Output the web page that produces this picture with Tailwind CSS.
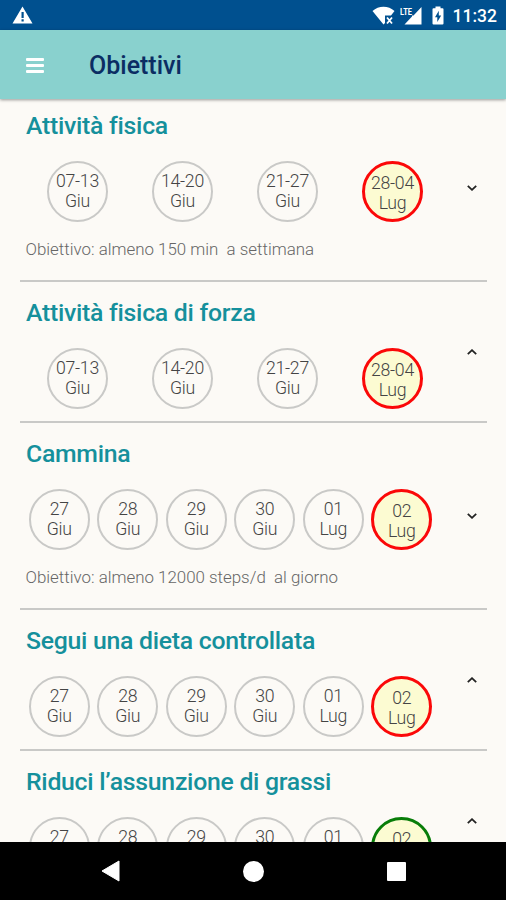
<!DOCTYPE html>
<html lang="it">
<head>
    <meta charset="UTF-8">
    <meta name="viewport" content="width=device-width, initial-scale=1.0">
    <title>Obiettivi</title>
    <script src="https://cdn.jsdelivr.net/npm/@tailwindcss/browser@4"></script>
</head>
<body class="h-screen flex flex-col overflow-hidden bg-[#fcfaf6] font-['Roboto',sans-serif]">
    <!-- Status bar -->
    <div class="h-[30px] shrink-0 bg-[#00508f] flex items-center justify-between pl-[12px] pr-[9px] text-white">
        <svg class="w-[21px] h-[18px]" viewBox="0 0 21 18" fill="currentColor">
            <path fill-rule="evenodd" d="M10.5 0.5L20.5 17.5H0.5ZM9.5 6V12H11.7V6ZM9.5 13.3V15.5H11.7V13.3Z"/>
        </svg>
        <div class="flex items-center">
            <svg class="w-[23px] h-[19px]" viewBox="0 0 23 19" fill="currentColor">
                <path d="M0.5 5C6.5 -0.7 16.5 -0.7 22.5 5L19 9.5H13V17L11.5 18.5Z"/>
                <path d="M15 11.5L20 17.5M20 11.5L15 17.5" stroke="currentColor" stroke-width="1.8"/>
            </svg>
            <svg class="w-[22px] h-[19px] ml-[5px]" viewBox="0 0 22 19" fill="currentColor">
                <path d="M21.5 1V18.5H4.5L12 10.5V9.5H13.5Z"/>
                <text x="0" y="8.5" font-size="9.5" font-weight="700" textLength="12" lengthAdjust="spacingAndGlyphs">LTE</text>
            </svg>
            <svg class="w-[12px] h-[19px] ml-[10px]" viewBox="0 0 12 19" fill="currentColor">
                <path fill-rule="evenodd" d="M3.5 0.5H8.5V2.3H10.5Q11.5 2.3 11.5 3.3V17.5Q11.5 18.5 10.5 18.5H1.5Q0.5 18.5 0.5 17.5V3.3Q0.5 2.3 1.5 2.3H3.5ZM6.8 4.8L3 11.3H5.3V16L9.2 9.5H6.8Z"/>
            </svg>
            <span class="ml-[9px] pt-[3px] text-[17.5px] font-medium leading-none">11:32</span>
        </div>
    </div>

    <!-- Toolbar -->
    <header class="relative z-10 h-[69px] shrink-0 bg-[#89d1ce] flex items-center pl-[26px] pt-px shadow-[0_1px_3px_rgba(0,0,0,0.4)]">
        <button class="w-[18px] flex flex-col gap-[3px]" aria-label="Menu">
            <span class="h-[3px] w-full rounded-[1px] bg-white"></span>
            <span class="h-[3px] w-full rounded-[1px] bg-white"></span>
            <span class="h-[3px] w-full rounded-[1px] bg-white"></span>
        </button>
        <h1 class="ml-[45px] text-[25px] font-medium leading-none text-[#0b2d63]">Obiettivi</h1>
    </header>

    <!-- Goals list -->
    <main id="goals" class="flex-1 min-h-0 -mt-[4px] overflow-hidden"></main>

    <!-- Navigation bar -->
    <nav class="h-[58px] shrink-0 bg-black flex items-center justify-center gap-[123px] text-white">
        <svg class="w-[19px] h-[22px]" viewBox="0 0 19 22" fill="currentColor"><path d="M18 1V21L1 11Z" stroke="currentColor" stroke-linejoin="round"/></svg>
        <span class="size-[21px] rounded-full bg-white"></span>
        <span class="size-[19px] rounded-[1px] bg-white"></span>
    </nav>

    <script>
        const weeks = ['07-13 Giu', '14-20 Giu', '21-27 Giu', '28-04 Lug'];
        const days = ['27 Giu', '28 Giu', '29 Giu', '30 Giu', '01 Lug', '02 Lug'];
        const goals = [
            { title: 'Attività fisica', periods: weeks, note: 'Obiettivo: almeno 150 min  a settimana', current: 'border-[#fb0808]' },
            { title: 'Attività fisica di forza', periods: weeks, current: 'border-[#fb0808]' },
            { title: 'Cammina', periods: days, note: 'Obiettivo: almeno 12000 steps/d  al giorno', current: 'border-[#fb0808]' },
            { title: 'Segui una dieta controllata', periods: days, current: 'border-[#fb0808]' },
            { title: 'Riduci l’assunzione di grassi', periods: days, current: 'border-[#087d08]' },
        ];

        document.getElementById('goals').innerHTML = goals.map(goal => {
            const circles = goal.periods.map((period, i) => {
                const [num, month] = period.split(' ');
                const style = i === goal.periods.length - 1
                    ? `border-3 bg-[#fcfbd2] pt-[2px] ${goal.current}`
                    : 'border-2 border-[#c9c9c7] pb-px';
                return `
                    <div class="${goal.periods === weeks ? 'w-[105px]' : 'w-[68.5px]'} flex justify-center">
                        <div class="size-[61px] rounded-full flex flex-col items-center justify-center text-[17.7px] tracking-[-0.3px] font-light leading-[20px] text-[#444] ${style}">
                            <span>${num}</span><span>${month}</span>
                        </div>
                    </div>`;
            }).join('');
            return `
                <section class="${goal.note ? 'h-[187px]' : 'h-[141px]'} ml-[20px] mr-[19px] pl-[5px] border-b-2 border-[#c9c9c7] flex items-center justify-between">
                    <div class="h-full pt-[17px]">
                        <h2 class="h-[49px] pl-px text-[24.8px] tracking-[-0.27px] font-medium leading-[28px] text-[#15909c]">${goal.title}</h2>
                        <div class="flex">${circles}</div>
                        ${goal.note ? `<p class="mt-[17px] pl-[0.5px] text-[16.9px] font-light leading-[20px] whitespace-pre text-[#666]">${goal.note}</p>` : ''}
                    </div>
                    <svg class="w-[10px] h-[6px] mr-[10px] shrink-0" viewBox="0 0 10 6" fill="none" stroke="#222" stroke-width="1.8">
                        <path d="${goal.note ? 'M0.8 0.8L5 4.8L9.2 0.8' : 'M0.8 5.2L5 1.2L9.2 5.2'}"/>
                    </svg>
                </section>`;
        }).join('');
    </script>
</body>
</html>
